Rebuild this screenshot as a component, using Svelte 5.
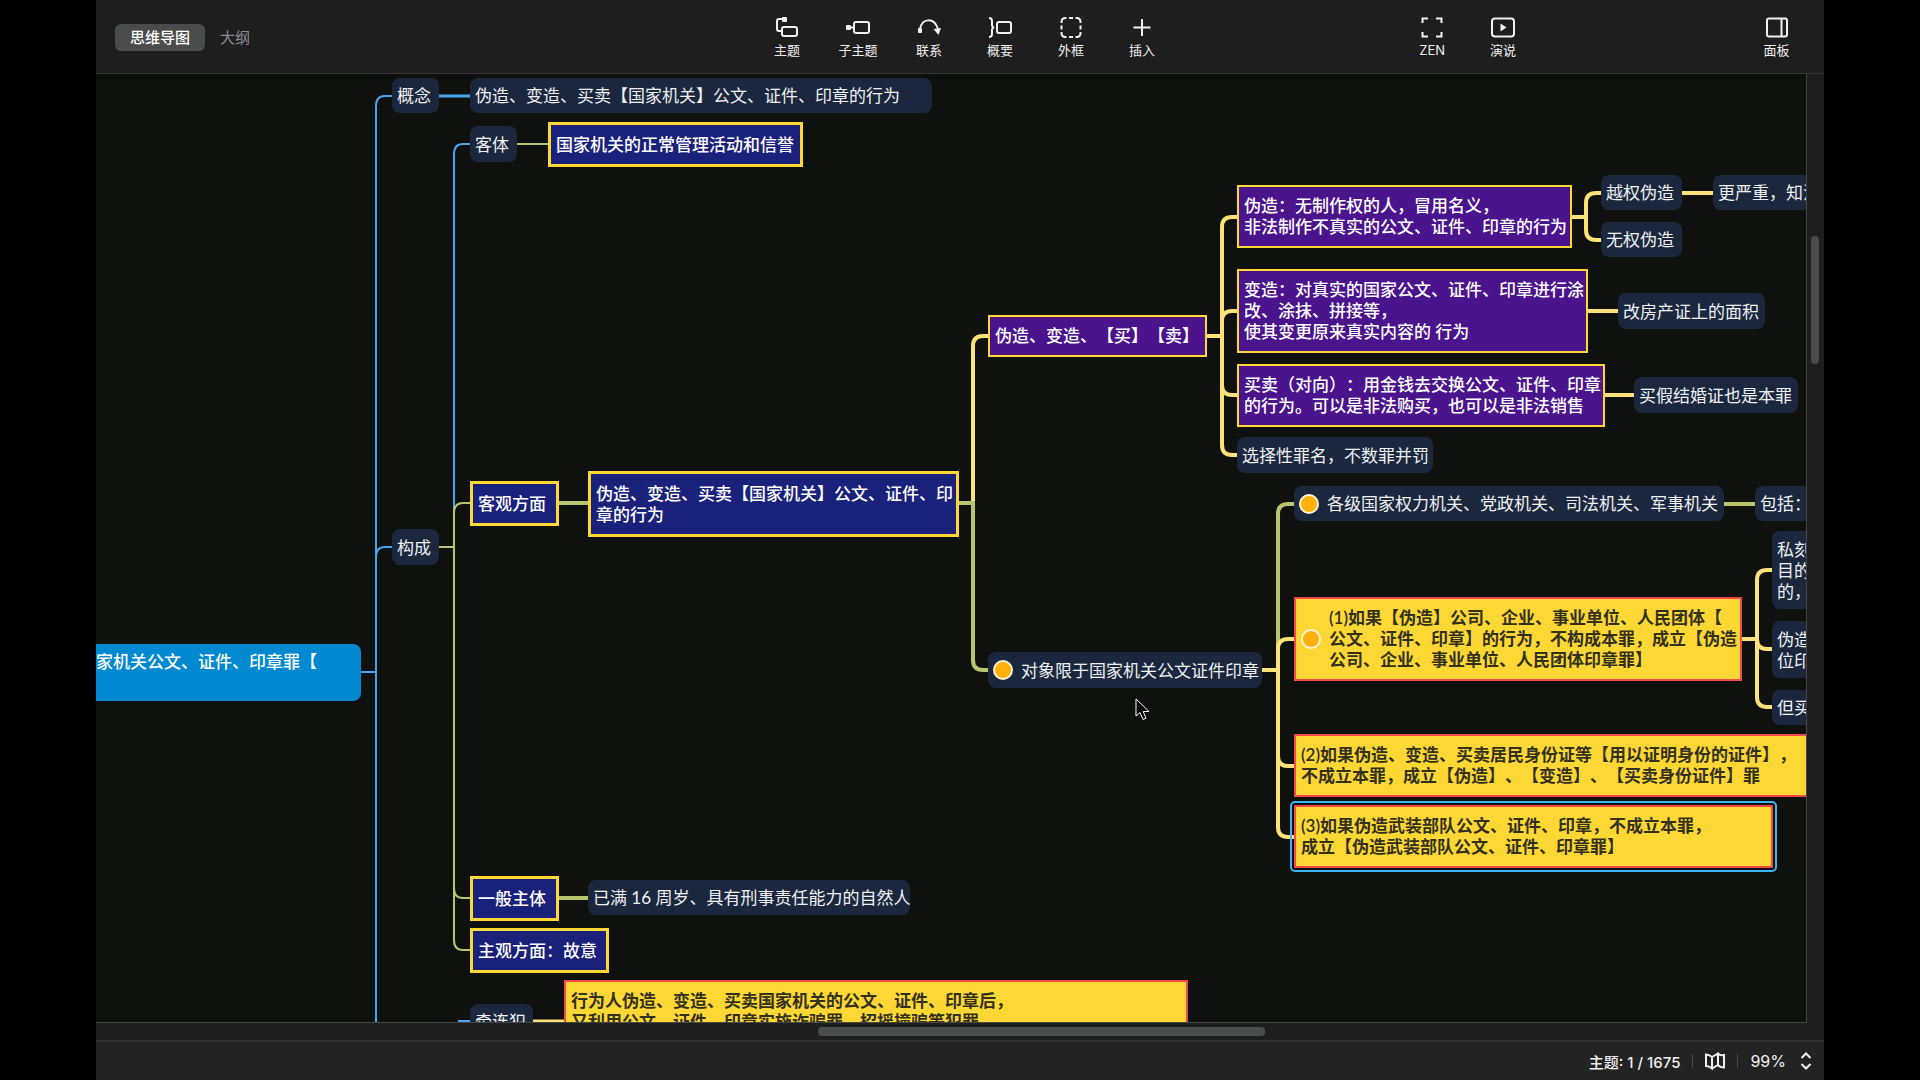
<script lang="ts">
	type Kind = 'plain' | 'blue' | 'purple' | 'yellow' | 'root';

	interface Topic {
		x: number;
		y: number;
		w: number;
		h: number;
		kind: Kind;
		lines: string[];
		marker?: boolean;
		id?: number;
	}

	interface Branch {
		d: string;
		color: 'sky' | 'olive' | 'cream';
		width: number;
	}

	const topics: Topic[] = [
		{ x: 74, y: 644, w: 287, h: 57, kind: 'root', lines: ['国家机关公文、证件、印章罪【'] },
		{ x: 392, y: 78, w: 47, h: 35, kind: 'plain', lines: ['概念'] },
		{ x: 470, y: 78, w: 462, h: 35, kind: 'plain', lines: ['伪造、变造、买卖【国家机关】公文、证件、印章的行为'] },
		{ x: 392, y: 529, w: 47, h: 36, kind: 'plain', lines: ['构成'] },
		{ x: 470, y: 126, w: 47, h: 36, kind: 'plain', lines: ['客体'] },
		{ x: 548, y: 122, w: 255, h: 45, kind: 'blue', lines: ['国家机关的正常管理活动和信誉'] },
		{ x: 470, y: 481, w: 89, h: 45, kind: 'blue', lines: ['客观方面'] },
		{ x: 588, y: 471, w: 371, h: 66, kind: 'blue', lines: ['伪造、变造、买卖【国家机关】公文、证件、印', '章的行为'] },
		{ x: 470, y: 876, w: 89, h: 45, kind: 'blue', lines: ['一般主体'] },
		{ x: 588, y: 880, w: 322, h: 35, kind: 'plain', lines: ['已满 16 周岁、具有刑事责任能力的自然人'] },
		{ x: 470, y: 928, w: 139, h: 45, kind: 'blue', lines: ['主观方面：故意'] },
		{ x: 988, y: 315, w: 219, h: 42, kind: 'purple', lines: ['伪造、变造、【买】【卖】'] },
		{ x: 1237, y: 185, w: 335, h: 63, kind: 'purple', lines: ['伪造：无制作权的人，冒用名义，', '非法制作不真实的公文、证件、印章的行为'] },
		{ x: 1237, y: 269, w: 351, h: 84, kind: 'purple', lines: ['变造：对真实的国家公文、证件、印章进行涂', '改、涂抹、拼接等，', '使其变更原来真实内容的 行为'] },
		{ x: 1237, y: 364, w: 368, h: 63, kind: 'purple', lines: ['买卖（对向）：用金钱去交换公文、证件、印章', '的行为。可以是非法购买，也可以是非法销售'] },
		{ x: 1237, y: 437, w: 196, h: 36, kind: 'plain', lines: ['选择性罪名，不数罪并罚'] },
		{ x: 1601, y: 175, w: 81, h: 35, kind: 'plain', lines: ['越权伪造'] },
		{ x: 1601, y: 222, w: 81, h: 35, kind: 'plain', lines: ['无权伪造'] },
		{ x: 1713, y: 175, w: 160, h: 35, kind: 'plain', lines: ['更严重，知法'] },
		{ x: 1618, y: 293, w: 147, h: 36, kind: 'plain', lines: ['改房产证上的面积'] },
		{ x: 1634, y: 377, w: 164, h: 36, kind: 'plain', lines: ['买假结婚证也是本罪'] },
		{ x: 988, y: 652, w: 274, h: 36, kind: 'plain', marker: true, lines: ['对象限于国家机关公文证件印章'] },
		{ x: 1294, y: 486, w: 430, h: 35, kind: 'plain', marker: true, lines: ['各级国家权力机关、党政机关、司法机关、军事机关'] },
		{ x: 1755, y: 486, w: 120, h: 35, kind: 'plain', lines: ['包括：'] },
		{ x: 1294, y: 597, w: 448, h: 84, kind: 'yellow', marker: true, lines: ['(1)如果【伪造】公司、企业、事业单位、人民团体【', '公文、证件、印章】的行为，不构成本罪，成立【伪造', '公司、企业、事业单位、人民团体印章罪】'] },
		{ x: 1772, y: 531, w: 120, h: 78, kind: 'plain', lines: ['私刻', '目的', '的，'] },
		{ x: 1772, y: 621, w: 120, h: 57, kind: 'plain', lines: ['伪造', '位印'] },
		{ x: 1772, y: 690, w: 120, h: 35, kind: 'plain', lines: ['但买'] },
		{ x: 1294, y: 734, w: 560, h: 63, kind: 'yellow', lines: ['(2)如果伪造、变造、买卖居民身份证等【用以证明身份的证件】，', '不成立本罪，成立【伪造】、【变造】、【买卖身份证件】罪'] },
		{ x: 1294, y: 805, w: 479, h: 63, kind: 'yellow', id: 1, lines: ['(3)如果伪造武装部队公文、证件、印章，不成立本罪，', '成立【伪造武装部队公文、证件、印章罪】'] },
		{ x: 470, y: 1004, w: 63, h: 35, kind: 'plain', lines: ['牵连犯'] },
		{ x: 564, y: 980, w: 624, h: 63, kind: 'yellow', lines: ['行为人伪造、变造、买卖国家机关的公文、证件、印章后，', '又利用公文、证件、印章实施诈骗罪、招摇撞骗等犯罪'] }
	];

	const branches: Branch[] = [
		{ d: 'M361 672H376M392 96H385Q376 96 376 106V1040M376 557Q376 547 385 547H392', color: 'sky', width: 2 },
		{ d: 'M439 96H470', color: 'sky', width: 3 },
		{ d: 'M470 144H463Q454 144 454 154V512M458 1021H470', color: 'sky', width: 2 },
		{ d: 'M439 547H454M470 503H463Q454 503 454 513V940Q454 950 463 950H470M454 888Q454 898 463 898H470', color: 'olive', width: 2 },
		{ d: 'M517 144H548', color: 'olive', width: 2 },
		{ d: 'M559 503H588M559 898H588M1724 504H1755', color: 'olive', width: 4 },
		{ d: 'M973 503V346Q973 336 983 336H988', color: 'cream', width: 4 },
		{ d: 'M959 503H973V660Q973 670 983 670H988', color: 'olive', width: 4 },
		{ d: 'M1207 336H1222M1237 217H1232Q1222 217 1222 227V445Q1222 455 1232 455H1237M1222 321Q1222 311 1232 311H1237M1222 385Q1222 395 1232 395H1237', color: 'cream', width: 4 },
		{ d: 'M1572 217H1586M1601 193H1596Q1586 193 1586 203V230Q1586 240 1596 240H1601', color: 'cream', width: 4 },
		{ d: 'M1682 193H1713M1588 311H1618M1605 395H1634', color: 'cream', width: 4 },
		{ d: 'M1294 504H1288Q1278 504 1278 514V670', color: 'olive', width: 4 },
		{ d: 'M1262 670H1278M1294 639H1288Q1278 639 1278 649V827Q1278 837 1288 837H1294M1278 756Q1278 766 1288 766H1294', color: 'cream', width: 4 },
		{ d: 'M1742 639H1757M1772 570H1767Q1757 570 1757 580V697Q1757 707 1767 707H1772M1757 639Q1757 649 1767 649H1772', color: 'cream', width: 4 },
		{ d: 'M533 1021H564', color: 'cream', width: 3 }
	];

	const views = ['思维导图', '大纲'];
	const insertTools = ['主题', '子主题', '联系', '概要', '外框', '插入'];
	const showTools = ['ZEN', '演说'];

	// how far the sheet is scrolled inside the canvas
	const scroll = { x: 96, y: 74 };

	let activeView = $state('思维导图');
	let selected = $state(1);
</script>

{#snippet icon(name: string)}
	<svg class="icon" viewBox="0 0 28 24" aria-hidden="true">
		{#if name === '主题'}
			<path d="M9 4H6Q4 4 4 6V14Q4 16 6 16H9" />
			<rect x="9" y="12" width="15" height="9" rx="2" />
			<rect class="solid" x="9" y="2" width="5" height="5" rx="1" />
		{:else if name === '子主题'}
			<rect class="solid" x="2" y="10" width="5" height="5" rx="1" />
			<path d="M6 12.500H10" />
			<rect x="10" y="7" width="15" height="11" rx="2" />
		{:else if name === '联系'}
			<path d="M5 14C7 3 19 2 23 14" />
			<rect class="solid" x="3" y="13" width="4" height="5" rx="1" />
			<path class="solid" d="M18.500 14L26 13L23.500 20Z" />
		{:else if name === '概要'}
			<path d="M3 3Q6 3 6 6V10Q6 12 8 12.500Q6 13 6 15V19Q6 22 3 22" />
			<rect x="11" y="7" width="14" height="11" rx="2" />
		{:else if name === '外框'}
			<path d="M4.500 8V7Q4.500 3 8.500 3H9.500M18.500 3H19.500Q23.500 3 23.500 7V8M23.500 17V18Q23.500 22 19.500 22H18.500M9.500 22H8.500Q4.500 22 4.500 18V17M12 3H16M12 22H16M4.500 10.500V14.500M23.500 10.500V14.500" />
		{:else if name === '插入'}
			<path d="M14 4V21M5.500 12.500H22.500" />
		{:else if name === 'ZEN'}
			<path d="M4.500 8V3.500H10M18 3.500H23.500V8M23.500 17V21.500H18M10 21.500H4.500V17" />
		{:else if name === '演说'}
			<rect x="3" y="3.500" width="22" height="18" rx="3" />
			<path class="solid" d="M11.500 8.500L17.500 12.500L11.500 16.500Z" />
		{:else if name === '面板'}
			<rect x="4" y="3.500" width="20" height="18" rx="2" />
			<path d="M18.500 4V21" />
		{/if}
	</svg>
{/snippet}

{#snippet tool(name: string)}
	<button class="tool">
		{@render icon(name)}
		<span>{name}</span>
	</button>
{/snippet}

<div class="app">
	<header class="toolbar">
		<nav class="views">
			{#each views as view}
				<button class="view" class:active={view === activeView} onclick={() => (activeView = view)}>
					{view}
				</button>
			{/each}
		</nav>
		<div class="tools">
			{#each insertTools as name}
				{@render tool(name)}
			{/each}
		</div>
		<div class="tools right">
			{#each showTools as name}
				{@render tool(name)}
			{/each}
			<div class="spacer"></div>
			{@render tool('面板')}
		</div>
	</header>

	<main class="workspace">
		<div class="canvas">
			<div class="sheet" style="left: {-scroll.x}px; top: {-scroll.y}px">
				<svg class="branches" width="2000" height="1100" aria-hidden="true">
					{#each branches as branch}
						<path class={branch.color} d={branch.d} stroke-width={branch.width} />
					{/each}
				</svg>
				{#each topics as topic}
					<div
						class="topic {topic.kind}"
						class:selected={topic.id === selected}
						style="left: {topic.x}px; top: {topic.y}px; width: {topic.w}px; height: {topic.h}px"
					>
						{#if topic.marker}
							<span class="marker"></span>
						{/if}
						<div class="text">
							{#each topic.lines as line}
								<div>{line}</div>
							{/each}
						</div>
					</div>
				{/each}
				<svg class="cursor" viewBox="0 0 16 24" aria-hidden="true">
					<path d="M1 1V18L5 14.500L8 21.500L11 20.200L8.200 13.500H14Z" />
				</svg>
			</div>
		</div>
		<div class="scroll-y"><div class="thumb"></div></div>
		<div class="scroll-x"><div class="thumb"></div></div>
	</main>

	<footer class="status">
		<span class="count">主题: 1 / 1675</span>
		<span class="divider"></span>
		<button class="map" aria-label="导航">
			<svg viewBox="0 0 20 18" aria-hidden="true">
				<path d="M1 2.500Q4 2.500 7 5V16.500Q4 14 1 14ZM7 5L13 1.500V13L7 16.500M13 1.500Q15 4 19 3V15.500Q15 15.500 13 13" />
			</svg>
		</button>
		<span class="divider"></span>
		<button class="zoom">
			99%
			<svg viewBox="0 0 12 18" aria-hidden="true">
				<path d="M1.500 6L6 1.500L10.500 6M1.500 12L6 16.500L10.500 12" />
			</svg>
		</button>
	</footer>
</div>

<style>
	:global(body) {
		margin: 0;
		background: #000;
	}

	.app {
		display: flex;
		flex-direction: column;
		width: 90%;
		height: 100vh;
		margin: 0 auto;
		background: #1e1e1e;
		color: #f0f0f0;
		font-family: Inter, 'Noto Sans CJK SC', sans-serif;
	}

	button {
		margin: 0;
		padding: 0;
		border: none;
		background: none;
		color: inherit;
		font: inherit;
		cursor: pointer;
	}

	svg {
		fill: none;
		stroke: currentColor;
	}

	.toolbar {
		display: flex;
		align-items: center;
		height: 73px;
		flex-shrink: 0;
		border-bottom: 1px solid #363636;
	}

	.views {
		display: flex;
		align-items: center;
		width: 38%;
		padding: 2px 0 0 19px;
		box-sizing: border-box;
	}

	.view {
		height: 27px;
		padding: 0 15px;
		border-radius: 6px;
		color: #8c8c8c;
		font-size: 15px;
		line-height: 27px;
	}

	.view.active {
		background: #4a4c4b;
		color: #fff;
		font-weight: 500;
	}

	.tools {
		display: flex;
		margin-left: -1px;
		padding-top: 1px;
	}

	.tools.right {
		flex: 1;
		padding: 1px 12px 0 220px;
	}

	.spacer {
		flex: 1;
	}

	.tool {
		display: flex;
		flex-direction: column;
		align-items: center;
		gap: 2px;
		width: 71px;
		font-size: 13px;
		line-height: 18px;
	}

	.icon {
		width: 28px;
		height: 24px;
		stroke-width: 2;
	}

	.solid {
		fill: currentColor;
		stroke: none;
	}

	.workspace {
		display: grid;
		flex: 1;
		grid-template-columns: 1fr 17px;
		grid-template-rows: 1fr 17px;
		min-height: 0;
	}

	.canvas {
		position: relative;
		overflow: hidden;
		background: #0f110e;
		border-right: 1px solid #464646;
		border-bottom: 1px solid #464646;
	}

	.sheet {
		position: absolute;
	}

	.branches {
		display: block;
	}

	.sky {
		stroke: #45a5ef;
	}

	.olive {
		stroke: #b9c46f;
	}

	.cream {
		stroke: #fde27a;
	}

	.topic {
		position: absolute;
		display: flex;
		align-items: center;
		gap: 8px;
		padding: 0 5px;
		box-sizing: border-box;
		color: #fff;
		font-family: Lato, 'Noto Sans CJK SC', sans-serif;
		font-size: 17px;
		font-weight: 500;
		line-height: 21px;
		text-spacing-trim: space-all;
		white-space: nowrap;
	}

	.plain {
		border-radius: 8px;
		background: #1b273c;
		color: #eef1f4;
		font-weight: 400;
	}

	.root {
		align-items: flex-start;
		padding-top: 7px;
		border-radius: 8px;
		background: #0089d1;
	}

	.blue {
		padding-bottom: 1px;
		border: 3px solid #fdd835;
		background: #1a217b;
	}

	.purple {
		padding-bottom: 1px;
		border: 2px solid #fdd835;
		background: #4a148c;
	}

	.yellow {
		padding-bottom: 1px;
		border: 2px solid #f4484a;
		background: #fdd835;
		color: #33301d;
		font-weight: 600;
	}

	.selected {
		border-radius: 1px;
		outline: 2px solid #3fb4f5;
		outline-offset: 2px;
	}

	.marker {
		flex-shrink: 0;
		width: 20px;
		height: 20px;
		border: 2px solid #fff4d6;
		border-radius: 50%;
		box-sizing: border-box;
		background: #ffb10a;
	}

	.cursor {
		position: absolute;
		left: 1135px;
		top: 698px;
		width: 16px;
		height: 24px;
		fill: #000;
		stroke: #fff;
	}

	.scroll-y {
		padding: 162px 5px 0 4px;
	}

	.scroll-y .thumb {
		height: 128px;
		border-radius: 4px;
		background: #4b4c4c;
	}

	.scroll-x {
		padding: 4px 0 0 722px;
	}

	.scroll-x .thumb {
		width: 447px;
		height: 9px;
		border-radius: 4px;
		background: #4b4c4c;
	}

	.status {
		display: flex;
		align-items: center;
		justify-content: flex-end;
		gap: 12px;
		height: 38px;
		flex-shrink: 0;
		padding-right: 12px;
		border-top: 2px solid #2e3131;
		background: #232323;
		font-size: 15px;
	}

	.count {
		font-weight: 500;
	}

	.divider {
		width: 1px;
		height: 14px;
		background: #484848;
	}

	.map svg {
		display: block;
		width: 20px;
		height: 18px;
		stroke-width: 2;
	}

	.zoom {
		display: flex;
		align-items: center;
		gap: 14px;
		font-size: 16px;
	}

	.zoom svg {
		width: 12px;
		height: 18px;
		stroke-width: 2;
	}
</style>
